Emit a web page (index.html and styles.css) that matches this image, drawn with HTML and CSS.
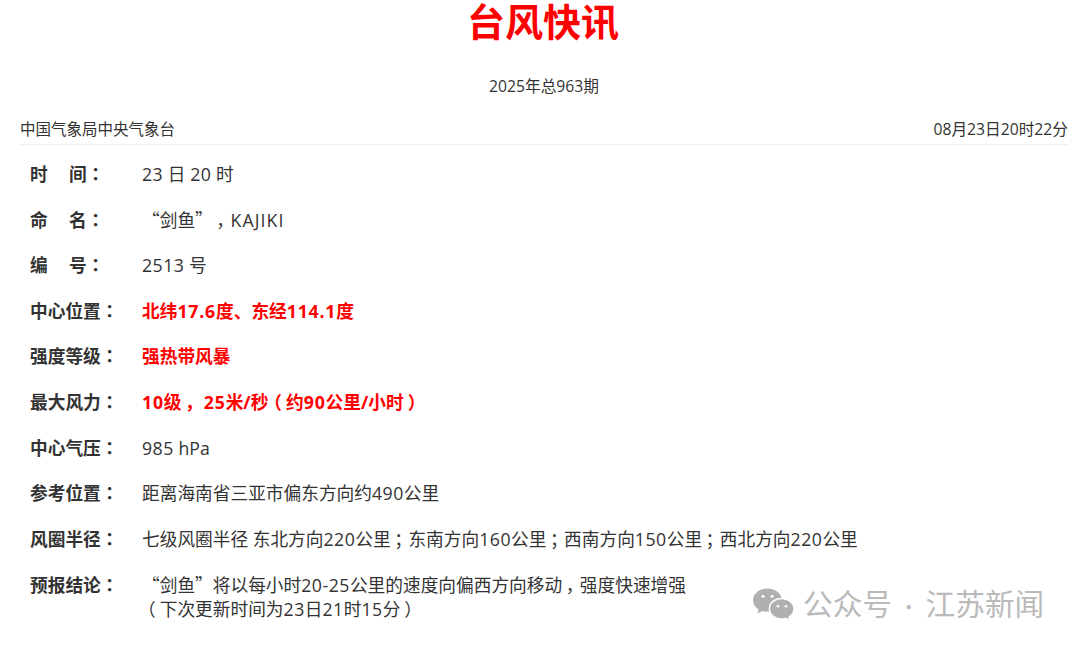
FILE: index.html
```html
<!DOCTYPE html>
<html lang="zh-CN">
<head>
<meta charset="utf-8">
<title>台风快讯</title>
<link rel="stylesheet" href="styles.css">
</head>
<body>
<main class="page">
  <h1 class="title">台风快讯</h1>
  <p class="issue">2025年总963期</p>
  <div class="meta">
    <span class="org">中国气象局中央气象台</span>
    <span>08月23日20时22分</span>
  </div>
  <div class="rows">
    <div class="row"><span class="label">时<span class="gap">间</span><span class="p" lang="zh-TW">：</span></span><span class="value"><span class="n">23</span> 日 <span class="n">20</span> 时</span></div>
    <div class="row"><span class="label">命<span class="gap">名</span><span class="p" lang="zh-TW">：</span></span><span class="value"><span class="q">“</span>剑鱼<span class="q">”</span><span class="c">，</span><span class="w">KAJIKI</span></span></div>
    <div class="row"><span class="label">编<span class="gap">号</span><span class="p" lang="zh-TW">：</span></span><span class="value"><span class="n">2513</span> 号</span></div>
    <div class="row"><span class="label">中心位置<span class="p" lang="zh-TW">：</span></span><span class="value alert">北纬<span class="n">17.6</span>度<span class="q">、</span>东经<span class="n">114.1</span>度</span></div>
    <div class="row"><span class="label">强度等级<span class="p" lang="zh-TW">：</span></span><span class="value alert">强热带风暴</span></div>
    <div class="row"><span class="label">最大风力<span class="p" lang="zh-TW">：</span></span><span class="value alert"><span class="n">10</span>级<span class="c">，</span> <span class="n">25</span>米/秒<span class="pl">（</span>约<span class="n">90</span>公里/小时<span class="pr">）</span></span></div>
    <div class="row"><span class="label">中心气压<span class="p" lang="zh-TW">：</span></span><span class="value"><span class="n">985</span> hPa</span></div>
    <div class="row"><span class="label">参考位置<span class="p" lang="zh-TW">：</span></span><span class="value">距离海南省三亚市偏东方向约<span class="n">490</span>公里</span></div>
    <div class="row"><span class="label">风圈半径<span class="p" lang="zh-TW">：</span></span><span class="value">七级风圈半径 东北方向<span class="n">220</span>公里<span class="c">；</span>东南方向<span class="n">160</span>公里<span class="c">；</span>西南方向<span class="n">150</span>公里<span class="c">；</span>西北方向<span class="n">220</span>公里</span></div>
    <div class="row"><span class="label">预报结论<span class="p" lang="zh-TW">：</span></span><span class="value"><span class="q">“</span>剑鱼<span class="q">”</span>将以每小时<span class="n">20-25</span>公里的速度向偏西方向移动<span class="c">，</span>强度快速增强<br><span class="pl">（</span>下次更新时间为<span class="n">23</span>日<span class="n">21</span>时<span class="n">15</span>分<span class="pr">）</span></span></div>
  </div>
</main>
<div class="watermark">
  <svg class="wx" viewBox="0 0 42 34" width="42" height="34" aria-hidden="true">
    <path fill="#b0b0b0" d="M15.500 0.500C7.500 0.500 1 5.800 1 12.300c0 3.800 2.200 7.100 5.600 9.300L5.500 25.500l4.900-2.500c1.600.5 3.300.7 5.100.7 8 0 14.500-5.100 14.500-11.400S23.500 0.500 15.500 0.500z"/>
    <path fill="#b0b0b0" stroke="#fff" stroke-width="1.500" d="M42 20.700c0-5.700-5.500-10.300-12.300-10.300s-12.300 4.600-12.300 10.300 5.500 10.300 12.300 10.300c1.400 0 2.700-.2 4-.6l4.300 2.600-1-3.800c3-1.900 5-4.900 5-8.500z"/>
    <circle fill="#fff" cx="11" cy="8.300" r="1.500"/><circle fill="#fff" cx="20" cy="8.300" r="1.500"/>
    <circle fill="#fff" cx="26" cy="18.300" r="1.300"/><circle fill="#fff" cx="34" cy="18.300" r="1.300"/>
  </svg>
  <span class="wm-text">公众号<span class="wm-dot">·</span>江苏新闻</span>
</div>
</body>
</html>
```

FILE: styles.css
```css
* { box-sizing: border-box; }
html, body { margin: 0; padding: 0; height: 647px; overflow: hidden; background: #fff; }
body {
  position: relative;
  font-family: "Open Sans", "Noto Sans CJK SC", sans-serif;
  color: #333;
  text-spacing-trim: space-all;
}
.p, .q, .c, .pl, .pr { line-height: 1; }
.p { font-family: "Noto Sans CJK TC", sans-serif; }
.q { font-family: "Noto Sans CJK SC", sans-serif; }
.c, .pl, .pr { font-family: "Noto Sans CJK SC", sans-serif; font-feature-settings: "halt"; }
.c { padding: 0 5.350px 0 3.500px; }
.pl { padding: 0 4px 0 4.850px; }
.pr { padding: 0 4.850px 0 4px; }
.n { letter-spacing: 0.5px; }
.alert .n { letter-spacing: 0.8px; }
.w { letter-spacing: 1.100px; }
.page { padding: 0 12px 0 20px; }
.title {
  margin: 0;
  padding-right: 2px;
  height: 44px;
  line-height: 42px;
  text-align: center;
  font-size: 38px;
  font-weight: 700;
  color: #f00;
}
.issue {
  margin: 31px 0 0;
  height: 22px;
  line-height: 22px;
  text-align: center;
  font-size: 15.700px;
}
.meta {
  display: flex;
  justify-content: space-between;
  margin-top: 20px;
  height: 28px;
  line-height: 25px;
  font-size: 15.700px;
  border-bottom: 1px solid #eee;
}
.org { font-size: 15.500px; }
.rows { padding: 7px 0 0 10px; }
.row {
  display: flex;
  height: 45.600px;
  line-height: 45.600px;
  font-size: 17.700px;
}
.row:last-child { height: auto; line-height: 24px; padding-top: 11px; }
.label { flex: 0 0 112px; font-weight: 700; white-space: nowrap; }
.gap { margin-left: 1.200em; }
.value { white-space: nowrap; }
.alert { color: #f00; font-weight: 700; }
.watermark {
  position: absolute;
  left: 752px;
  top: 586px;
  display: flex;
  align-items: center;
  gap: 9px;
  font-family: "Noto Sans CJK SC", sans-serif;
  font-size: 29.700px;
  line-height: 34px;
  color: #bababa;
  white-space: nowrap;
}
.wm-dot { display: inline-block; width: 33.500px; text-align: center; font-size: 20px; }
.wx { display: block; }
```
